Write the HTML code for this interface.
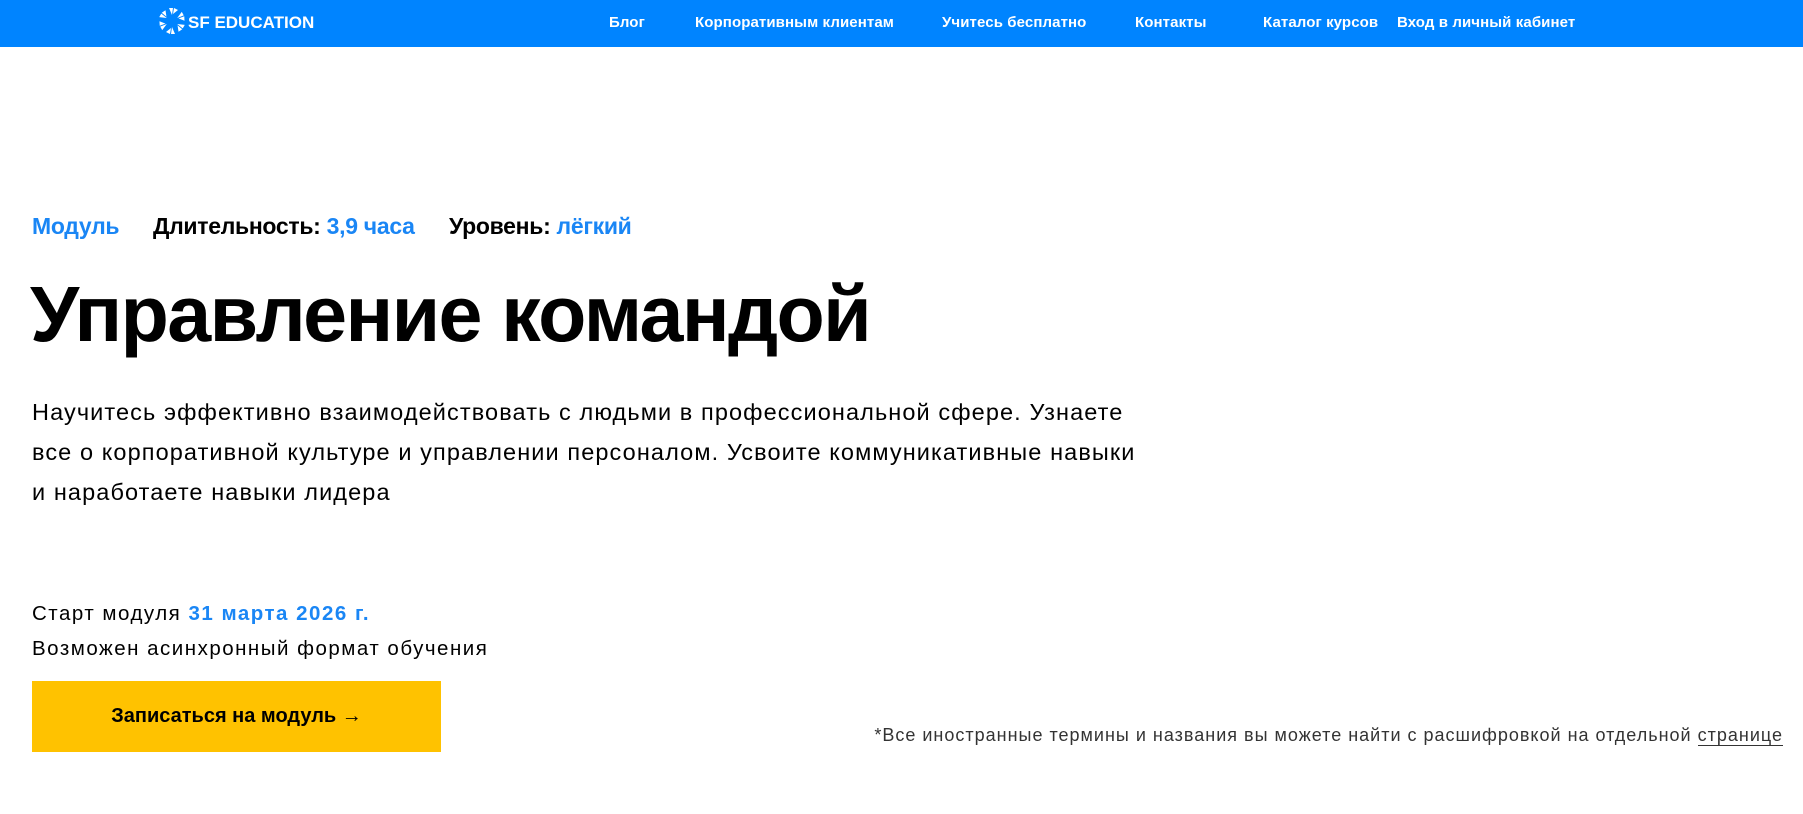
<!DOCTYPE html>
<html><head><meta charset="utf-8"><style>
*{margin:0;padding:0;box-sizing:border-box}
body{width:1803px;height:814px;overflow:hidden;background:#fff;font-family:"Liberation Sans",sans-serif;color:#000;position:relative}
.nav{position:absolute;left:0;top:0;width:1803px;height:47px;background:#0084ff}
.nav a{position:absolute;top:14px;color:#fff;font-size:15px;font-weight:bold;text-decoration:none;white-space:nowrap;letter-spacing:0.1px}
.logo{position:absolute;left:158px;top:7px}
.logot{position:absolute;left:188px;top:13px;color:#fff;font-weight:bold;font-size:17px}
.meta{position:absolute;top:213px;font-size:23px;font-weight:bold;letter-spacing:-0.3px;white-space:nowrap}
.b{color:#1a86f5}
h1{position:absolute;left:30px;top:264px;font-size:79px;font-weight:bold;letter-spacing:-1.6px;white-space:nowrap;line-height:100px}
.p{position:absolute;left:32px;top:392px;font-size:23.5px;line-height:40px;width:1300px;letter-spacing:1.1px}
.s{position:absolute;left:32px;font-size:20.5px;white-space:nowrap;letter-spacing:1.5px}
.btn{position:absolute;left:32px;top:681px;width:409px;height:71px;background:#ffc200;font-weight:bold;font-size:20px;text-align:center;line-height:71px}
.fn{position:absolute;right:20px;top:725px;font-size:18px;color:#333;white-space:nowrap;letter-spacing:1px}
.fn u{text-decoration:none;border-bottom:1px solid #333}
</style></head><body>
<div class="nav">
<svg class="logo" width="28" height="28" viewBox="0 0 28 28" fill="#fff">
<g transform="translate(14 14)">
<g id="a"><path d="M-3 -13 L1 -13 L0 -6 Z"/><path d="M2 -13 L6 -11 L1 -7Z"/></g>
<use href="#a" transform="rotate(60)"/><use href="#a" transform="rotate(120)"/><use href="#a" transform="rotate(180)"/><use href="#a" transform="rotate(240)"/><use href="#a" transform="rotate(300)"/>
</g></svg>
<div class="logot">SF EDUCATION</div>
<a style="left:609px">Блог</a>
<a style="left:695px">Корпоративным клиентам</a>
<a style="left:942px">Учитесь бесплатно</a>
<a style="left:1135px">Контакты</a>
<a style="left:1263px">Каталог курсов</a>
<a style="left:1397px">Вход в личный кабинет</a>
</div>
<div class="meta b" style="left:32px">Модуль</div>
<div class="meta" style="left:153px">Длительность: <span class="b">3,9 часа</span></div>
<div class="meta" style="left:449px">Уровень: <span class="b">лёгкий</span></div>
<h1>Управление командой</h1>
<div class="p">Научитесь эффективно взаимодействовать с людьми в профессиональной сфере. Узнаете<br>все о корпоративной культуре и управлении персоналом. Усвоите коммуникативные навыки<br>и наработаете навыки лидера</div>
<div class="s" style="top:602px">Старт модуля <b class="b">31 марта 2026 г.</b></div>
<div class="s" style="top:637px">Возможен асинхронный формат обучения</div>
<div class="btn">Записаться на модуль →</div>
<div class="fn">*Все иностранные термины и названия вы можете найти с расшифровкой на отдельной <u>странице</u></div>
</body></html>
